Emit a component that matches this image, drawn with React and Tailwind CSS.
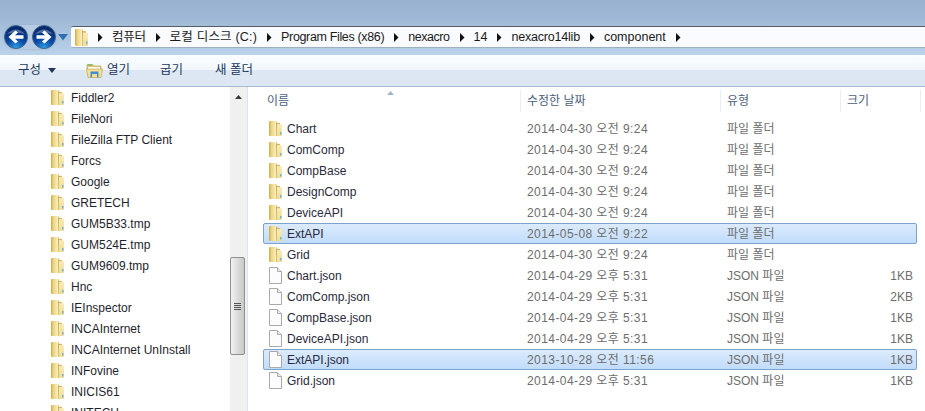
const FONT = '"Liberation Sans","Noto Sans CJK KR",sans-serif';

function Folder({ big }) {
  return (
    <svg width={15} height={big ? 19 : 17} viewBox="0 0 15 17" preserveAspectRatio="none" className="shrink-0">
      <defs>
        <linearGradient id="fl" x1="0" y1="0" x2="1" y2="0">
          <stop offset="0" stopColor="#cdaa4c" />
          <stop offset="0.35" stopColor="#ecd582" />
          <stop offset="1" stopColor="#faefbe" />
        </linearGradient>
        <linearGradient id="fr" x1="0" y1="0" x2="0" y2="1">
          <stop offset="0" stopColor="#f8ecb8" />
          <stop offset="1" stopColor="#f0dd96" />
        </linearGradient>
      </defs>
      <path d="M1 2 Q1 1 2 1 L8 1 L8 16 L2 16 Q1 16 1 15Z" fill="url(#fl)" />
      <path d="M8 2.5 L12 3 L12 14 L8 16Z" fill="#d4ba68" />
      <path d="M9 4 L14 4.5 L14 15 Q14 16 13 16 L8 16Z" fill="url(#fr)" />
      <rect x="8" y="1" width="1" height="15" fill="#b89c4c" opacity="0.4" />
      <rect x="12" y="12" width="1.5" height="2.5" fill="#6fb4e0" />
    </svg>
  );
}

function FileIcon() {
  return (
    <svg width="15" height="17" viewBox="0 0 15 17" className="shrink-0">
      <path d="M1.5 0.5 H9.5 L13.5 4.5 V16.5 H1.5Z" fill="#fcfcfc" stroke="#a9a9a9" />
      <path d="M9.5 0.5 V4.5 H13.5" fill="#ececec" stroke="#a9a9a9" />
    </svg>
  );
}

function Arrow() {
  return (
    <svg width="6" height="9" viewBox="0 0 6 9" className="shrink-0">
      <path d="M1 0 L5.5 4.5 L1 9Z" fill="#111" />
    </svg>
  );
}

function NavButton({ flip }) {
  return (
    <svg width="24" height="24" viewBox="0 0 24 24" className={flip ? "-scale-x-100" : ""}>
      <defs>
        <radialGradient id="nb" cx="0.5" cy="1" r="0.85">
          <stop offset="0" stopColor="#2fa4ec" />
          <stop offset="0.5" stopColor="#0a4aa4" />
          <stop offset="1" stopColor="#062a70" />
        </radialGradient>
      </defs>
      <circle cx="12" cy="12" r="11.5" fill="url(#nb)" stroke="#46658f" />
      <path d="M3 9 Q12 0 21 9 Q12 6 3 9Z" fill="#ffffff" opacity="0.3" />
      <path d="M4.5 12 L11.5 5.5 L14 7.5 L11 10.2 H19.5 V13.8 H11 L14 16.5 L11.5 18.5Z" fill="#fff" />
    </svg>
  );
}

const crumbs = [
  ["컴퓨터", "tracking-[-0.3px]"],
  ["로컬 디스크 (C:)", "tracking-[0.2px]"],
  ["Program Files (x86)", "tracking-[-0.35px]"],
  ["nexacro", "tracking-[-0.45px]"],
  ["14", ""],
  ["nexacro14lib", "tracking-[-0.2px]"],
  ["component", ""],
];

const tree = ["Fiddler2", "FileNori", "FileZilla FTP Client", "Forcs", "Google", "GRETECH", "GUM5B33.tmp", "GUM524E.tmp", "GUM9609.tmp", "Hnc", "IEInspector", "INCAInternet", "INCAInternet UnInstall", "INFovine", "INICIS61", "INITECH"];

const rows = [
  ["Chart", "2014-04-30 오전 9:24", "파일 폴더", "", 0],
  ["ComComp", "2014-04-30 오전 9:24", "파일 폴더", "", 0],
  ["CompBase", "2014-04-30 오전 9:24", "파일 폴더", "", 0],
  ["DesignComp", "2014-04-30 오전 9:24", "파일 폴더", "", 0],
  ["DeviceAPI", "2014-04-30 오전 9:24", "파일 폴더", "", 0],
  ["ExtAPI", "2014-05-08 오전 9:22", "파일 폴더", "", 1],
  ["Grid", "2014-04-30 오전 9:24", "파일 폴더", "", 0],
  ["Chart.json", "2014-04-29 오후 5:31", "JSON 파일", "1KB", 0],
  ["ComComp.json", "2014-04-29 오후 5:31", "JSON 파일", "2KB", 0],
  ["CompBase.json", "2014-04-29 오후 5:31", "JSON 파일", "1KB", 0],
  ["DeviceAPI.json", "2014-04-29 오후 5:31", "JSON 파일", "1KB", 0],
  ["ExtAPI.json", "2013-10-28 오전 11:56", "JSON 파일", "1KB", 1],
  ["Grid.json", "2014-04-29 오후 5:31", "JSON 파일", "1KB", 0],
];

export default function App() {
  return (
    <div className="w-[925px] h-[411px] overflow-hidden flex flex-col bg-white text-[12px]" style={{ fontFamily: FONT }}>
      {/* Title / address area */}
      <div className="h-[55px] shrink-0 bg-[linear-gradient(#98b2d0,#9db7d4_30%,#bad2ea)] flex items-start pt-[25px] pl-[4px]">
        <div className="flex items-center h-[24px] rounded-full bg-[#b7cbe2] shadow-[0_0_2px_#8ea6c4]">
          <NavButton />
          <div className="w-[4px]" />
          <NavButton flip />
        </div>
        <svg width="10" height="7" viewBox="0 0 10 7" className="ml-[2px] mt-[9px]">
          <path d="M0 0 H10 L5 6.5Z" fill="#2f6fb0" />
        </svg>
        <div className="ml-[3px] w-[854px] h-[22px] mt-[1px] border-t border-t-[#555d66] border-b border-b-[#9fb0c4] bg-[#fafbfe] flex items-center pl-[3px] rounded-l-[2px] text-[#1a1a1a] text-[12.5px]">
          <Folder big />
          <div className="flex items-center gap-[9px] ml-[8px]">
            <Arrow />
            {crumbs.map(([c, cls]) => (
              <div key={c} className="flex items-center gap-[9px]">
                <span className={cls}>{c}</span>
                <Arrow />
              </div>
            ))}
          </div>
        </div>
      </div>

      {/* Toolbar */}
      <div className="h-[32px] shrink-0 border-b border-b-[#a9bad0] bg-[linear-gradient(#fbfdff,#f2f7fd_48%,#dde6f3_48%,#dde6f3)] flex items-center text-[#1e395b] text-[12.5px]">
        <span className="ml-[18px]">구성</span>
        <svg width="8" height="5" viewBox="0 0 8 5" className="ml-[7px]">
          <path d="M0 0 H8 L4 5Z" fill="#1e395b" />
        </svg>
        <svg width="17" height="15" viewBox="0 0 17 15" className="ml-[30px]">
          <path d="M1 1.5 H7 L8 3 H15 V6 H1Z" fill="#d8c878" stroke="#a8964a" strokeWidth="0.5" />
          <rect x="2" y="1.5" width="4" height="1.2" fill="#6cc05a" />
          <path d="M2 4 H14 V7 H2Z" fill="#fff" />
          <path d="M0.5 6 H16.5 L15 14.5 H2Z" fill="#f5de96" stroke="#c9a94e" strokeWidth="0.7" />
          <path d="M4.5 8.5 H12.5 V14.5 H11 V11 H6 V14.5 H4.5Z" fill="#3f8fd0" />
        </svg>
        <span className="ml-[4px]">열기</span>
        <span className="ml-[30px]">굽기</span>
        <span className="ml-[32px]">새 폴더</span>
      </div>

      {/* Body */}
      <div className="flex-1 flex min-h-0">
        {/* Tree */}
        <div className="w-[230px] shrink-0 overflow-hidden text-[#1f1f2e]">
          {tree.map((t) => (
            <div key={t} className="h-[21px] shrink-0 flex items-center pl-[50px] gap-[6px]">
              <Folder />
              <span>{t}</span>
            </div>
          ))}
        </div>

        {/* Scrollbar */}
        <div className="w-[18px] shrink-0 bg-[#f0f0f0] border-r border-r-[#d8e6f4] flex flex-col">
          <svg width="7" height="4" viewBox="0 0 7 4" className="mt-[8px] ml-[5px]">
            <path d="M0 4 L3.5 0 L7 4Z" fill="#3a3a3a" />
          </svg>
          <div className="mt-[158px] w-[15px] h-[98px] rounded-[2px] border border-[#8f8f8f] bg-[linear-gradient(90deg,#f2f2f2,#dcdcdc_50%,#c8c8c8)] flex flex-col items-center justify-center gap-[1px]">
            <div className="w-[7px] h-[1px] bg-[#555]" />
            <div className="w-[7px] h-[1px] bg-[#555]" />
            <div className="w-[7px] h-[1px] bg-[#555]" />
            <div className="w-[7px] h-[1px] bg-[#555]" />
          </div>
        </div>

        {/* List */}
        <div className="flex-1 min-w-0 relative">
          <div className="h-[31px] flex text-[#4c607a] pt-[3px]">
            <div className="w-[273px] h-[22px] pl-[19px] flex items-center relative border-r border-r-[#e6eef6]">
              이름
              <svg width="7" height="4" viewBox="0 0 7 4" className="absolute top-[1px] left-[139px]">
                <path d="M0 4 L3.5 0 L7 4Z" fill="#9db6d2" />
              </svg>
            </div>
            <div className="w-[200px] h-[22px] pl-[6px] flex items-center border-r border-r-[#e6eef6]">수정한 날짜</div>
            <div className="w-[120px] h-[22px] pl-[6px] flex items-center border-r border-r-[#e6eef6]">유형</div>
            <div className="w-[80px] h-[22px] pl-[6px] flex items-center border-r border-r-[#e6eef6]">크기</div>
          </div>
          <div className="w-[654px] ml-[15px]">
            {rows.map(([name, date, type, size, sel]) => (
              <div
                key={name}
                className={
                  "h-[21px] flex items-center border rounded-[2px] " +
                  (sel
                    ? "border-[#7da2ce] bg-[linear-gradient(#dcebfc,#c1dcfc)]"
                    : "border-transparent")
                }
              >
                <div className="w-[263px] flex items-center pl-[4px] gap-[4px] text-[#2a2a3a]">
                  {name.endsWith(".json") ? <FileIcon /> : <Folder />}
                  <span>{name}</span>
                </div>
                <div className="w-[200px] text-[#6d6d6d] tracking-[0.42px]">{date}</div>
                <div className="w-[120px] text-[#6d6d6d]">{type}</div>
                <div className="w-[66px] text-right text-[#6d6d6d]">{size}</div>
              </div>
            ))}
          </div>
        </div>
      </div>
    </div>
  );
}
